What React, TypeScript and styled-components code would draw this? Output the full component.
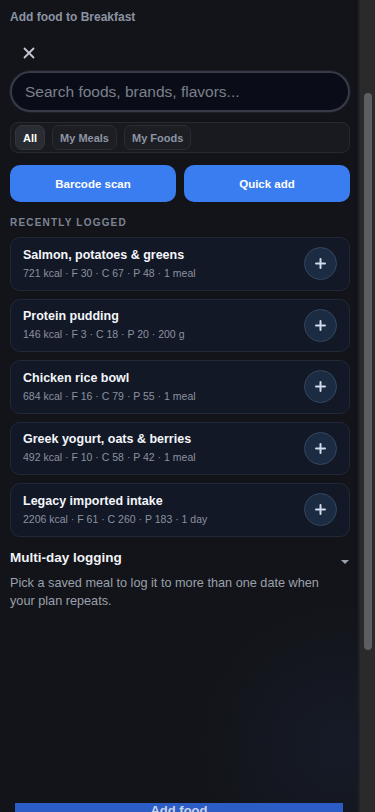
import React from "react";
import styled, { createGlobalStyle } from "styled-components";

const Global = createGlobalStyle`
  html, body { margin: 0; padding: 0; background: #131419; }
  body { font-family: "Liberation Sans", Arial, sans-serif; overflow: hidden; }
  * { box-sizing: border-box; }
`;

const Screen = styled.div`
  display: flex;
  width: 375px;
  height: 812px;
  overflow: hidden;
`;

const Panel = styled.div`
  flex: 1;
  display: flex;
  flex-direction: column;
  background: radial-gradient(circle at 95% 92%, rgba(30, 50, 90, 0.22), transparent 18%), #131419;
  border-right: 2px solid #202128;
  min-width: 0;
`;

const Content = styled.div`
  flex: 1;
  display: flex;
  flex-direction: column;
  padding: 10px 8px 0 10px;
`;

const Heading = styled.div`
  font-size: 12px;
  font-weight: 700;
  color: #8b93a3;
  line-height: 15px;
`;

const CloseBtn = styled.button`
  margin: 20px 0 0 11px;
  width: 16px;
  height: 16px;
  padding: 0;
  border: 0;
  background: none;
  color: #c3c8d2;
  display: flex;
  align-items: center;
  justify-content: center;
`;

const SearchBox = styled.div`
  margin-top: 10px;
  height: 41px;
  border-radius: 21px;
  background: #0a0d17;
  border: 2px solid #363b47;
  box-shadow: 0 0 0 1px #1c1f27;
  display: flex;
  align-items: center;
  padding: 0 13px;
  font-size: 15.5px;
  color: #7b808c;
`;

const Tabs = styled.div`
  margin-top: 10px;
  height: 31px;
  border-radius: 8px;
  background: #191a20;
  border: 1px solid #272931;
  display: flex;
  align-items: center;
  gap: 7px;
  padding: 0 4px;
`;

const Tab = styled.div<{ $active?: boolean }>`
  height: 25px;
  padding: 0 7px;
  border-radius: 7px;
  display: flex;
  align-items: center;
  font-size: 11px;
  font-weight: 700;
  color: ${(p) => (p.$active ? "#ffffff" : "#8d94a3")};
  background: ${(p) => (p.$active ? "#2a2c33" : "#1c1e24")};
  border: 1px solid ${(p) => (p.$active ? "#34363e" : "#2a2c34")};
`;

const Actions = styled.div`
  margin-top: 12px;
  display: grid;
  grid-template-columns: 1fr 1fr;
  gap: 8px;
`;

const Primary = styled.button`
  height: 37px;
  border: 0;
  border-radius: 10px;
  background: #3a7df1;
  color: #ffffff;
  font-family: inherit;
  font-size: 11.5px;
  font-weight: 700;
`;

const SectionLabel = styled.div`
  margin-top: 15px;
  font-size: 10px;
  font-weight: 700;
  letter-spacing: 1.2px;
  color: #7c8494;
  line-height: 12px;
`;

const List = styled.div`
  margin-top: 8px;
  display: flex;
  flex-direction: column;
  gap: 8px;
`;

const Card = styled.div`
  height: 53.5px;
  border-radius: 10px;
  background: #121826;
  border: 1px solid #212838;
  display: flex;
  align-items: center;
  padding: 0 12px;
`;

const CardText = styled.div`
  flex: 1;
  display: flex;
  flex-direction: column;
  gap: 4px;
`;

const CardTitle = styled.div`
  font-size: 12.5px;
  font-weight: 700;
  color: #f4f6fa;
  line-height: 15px;
`;

const CardMeta = styled.div`
  font-size: 10.5px;
  color: #8a91a0;
  line-height: 13px;
`;

const PlusBtn = styled.button`
  width: 33px;
  height: 33px;
  border-radius: 50%;
  background: #1b2b41;
  border: 1px solid #35475f;
  color: #d0dae8;
  padding: 0;
  display: flex;
  align-items: center;
  justify-content: center;
`;

const MultiHead = styled.div`
  margin-top: 13px;
  display: flex;
  align-items: center;
  justify-content: space-between;
  padding-right: 1px;
`;

const MultiTitle = styled.div`
  font-size: 13.5px;
  font-weight: 700;
  color: #f1f3f7;
  line-height: 16px;
`;

const Caret = styled.div`
  width: 0;
  height: 0;
  margin-top: 8px;
  border-left: 4px solid transparent;
  border-right: 4px solid transparent;
  border-top: 4px solid #9aa2b0;
`;

const MultiText = styled.p`
  margin: 8px 0 0;
  max-width: 330px;
  font-size: 12.7px;
  line-height: 18px;
  color: #9aa0ac;
`;

const Footer = styled.div`
  height: 9px;
  padding: 0 15px;
  display: flex;
  overflow: hidden;
`;

const FooterBtn = styled.div`
  flex: 1;
  height: 36px;
  background: #2c5cc6;
  color: #c7d3ea;
  font-size: 13px;
  font-weight: 700;
  text-align: center;
  line-height: 16px;
`;

const Rail = styled.div`
  width: 15px;
  background: #2a2a2b;
  display: flex;
  justify-content: center;
`;

const Thumb = styled.div`
  margin-top: 93px;
  width: 8px;
  height: 557px;
  border-radius: 4px;
  background: #5d5e61;
`;

const items = [
  { t: "Salmon, potatoes & greens", m: "721 kcal · F 30 · C 67 · P 48 · 1 meal" },
  { t: "Protein pudding", m: "146 kcal · F 3 · C 18 · P 20 · 200 g" },
  { t: "Chicken rice bowl", m: "684 kcal · F 16 · C 79 · P 55 · 1 meal" },
  { t: "Greek yogurt, oats & berries", m: "492 kcal · F 10 · C 58 · P 42 · 1 meal" },
  { t: "Legacy imported intake", m: "2206 kcal · F 61 · C 260 · P 183 · 1 day" },
];

const XIcon = () => (
  <svg width="12" height="12" viewBox="0 0 12 12" fill="none" stroke="currentColor" strokeWidth="1.8" strokeLinecap="round">
    <path d="M1.5 1.5 L10.5 10.5 M10.5 1.5 L1.5 10.5" />
  </svg>
);

const PlusIcon = () => (
  <svg width="11" height="11" viewBox="0 0 11 11" fill="none" stroke="currentColor" strokeWidth="2" strokeLinecap="round">
    <path d="M5.5 1 V10 M1 5.5 H10" />
  </svg>
);

export default function App() {
  return (
    <>
      <Global />
      <Screen>
        <Panel>
          <Content>
            <Heading>Add food to Breakfast</Heading>
            <CloseBtn aria-label="Close"><XIcon /></CloseBtn>
            <SearchBox>Search foods, brands, flavors...</SearchBox>
            <Tabs>
              <Tab $active>All</Tab>
              <Tab>My Meals</Tab>
              <Tab>My Foods</Tab>
            </Tabs>
            <Actions>
              <Primary>Barcode scan</Primary>
              <Primary>Quick add</Primary>
            </Actions>
            <SectionLabel>RECENTLY LOGGED</SectionLabel>
            <List>
              {items.map((it) => (
                <Card key={it.t}>
                  <CardText>
                    <CardTitle>{it.t}</CardTitle>
                    <CardMeta>{it.m}</CardMeta>
                  </CardText>
                  <PlusBtn aria-label="Add"><PlusIcon /></PlusBtn>
                </Card>
              ))}
            </List>
            <MultiHead>
              <MultiTitle>Multi-day logging</MultiTitle>
              <Caret />
            </MultiHead>
            <MultiText>Pick a saved meal to log it to more than one date when your plan repeats.</MultiText>
          </Content>
          <Footer>
            <FooterBtn>Add food</FooterBtn>
          </Footer>
        </Panel>
        <Rail>
          <Thumb />
        </Rail>
      </Screen>
    </>
  );
}
